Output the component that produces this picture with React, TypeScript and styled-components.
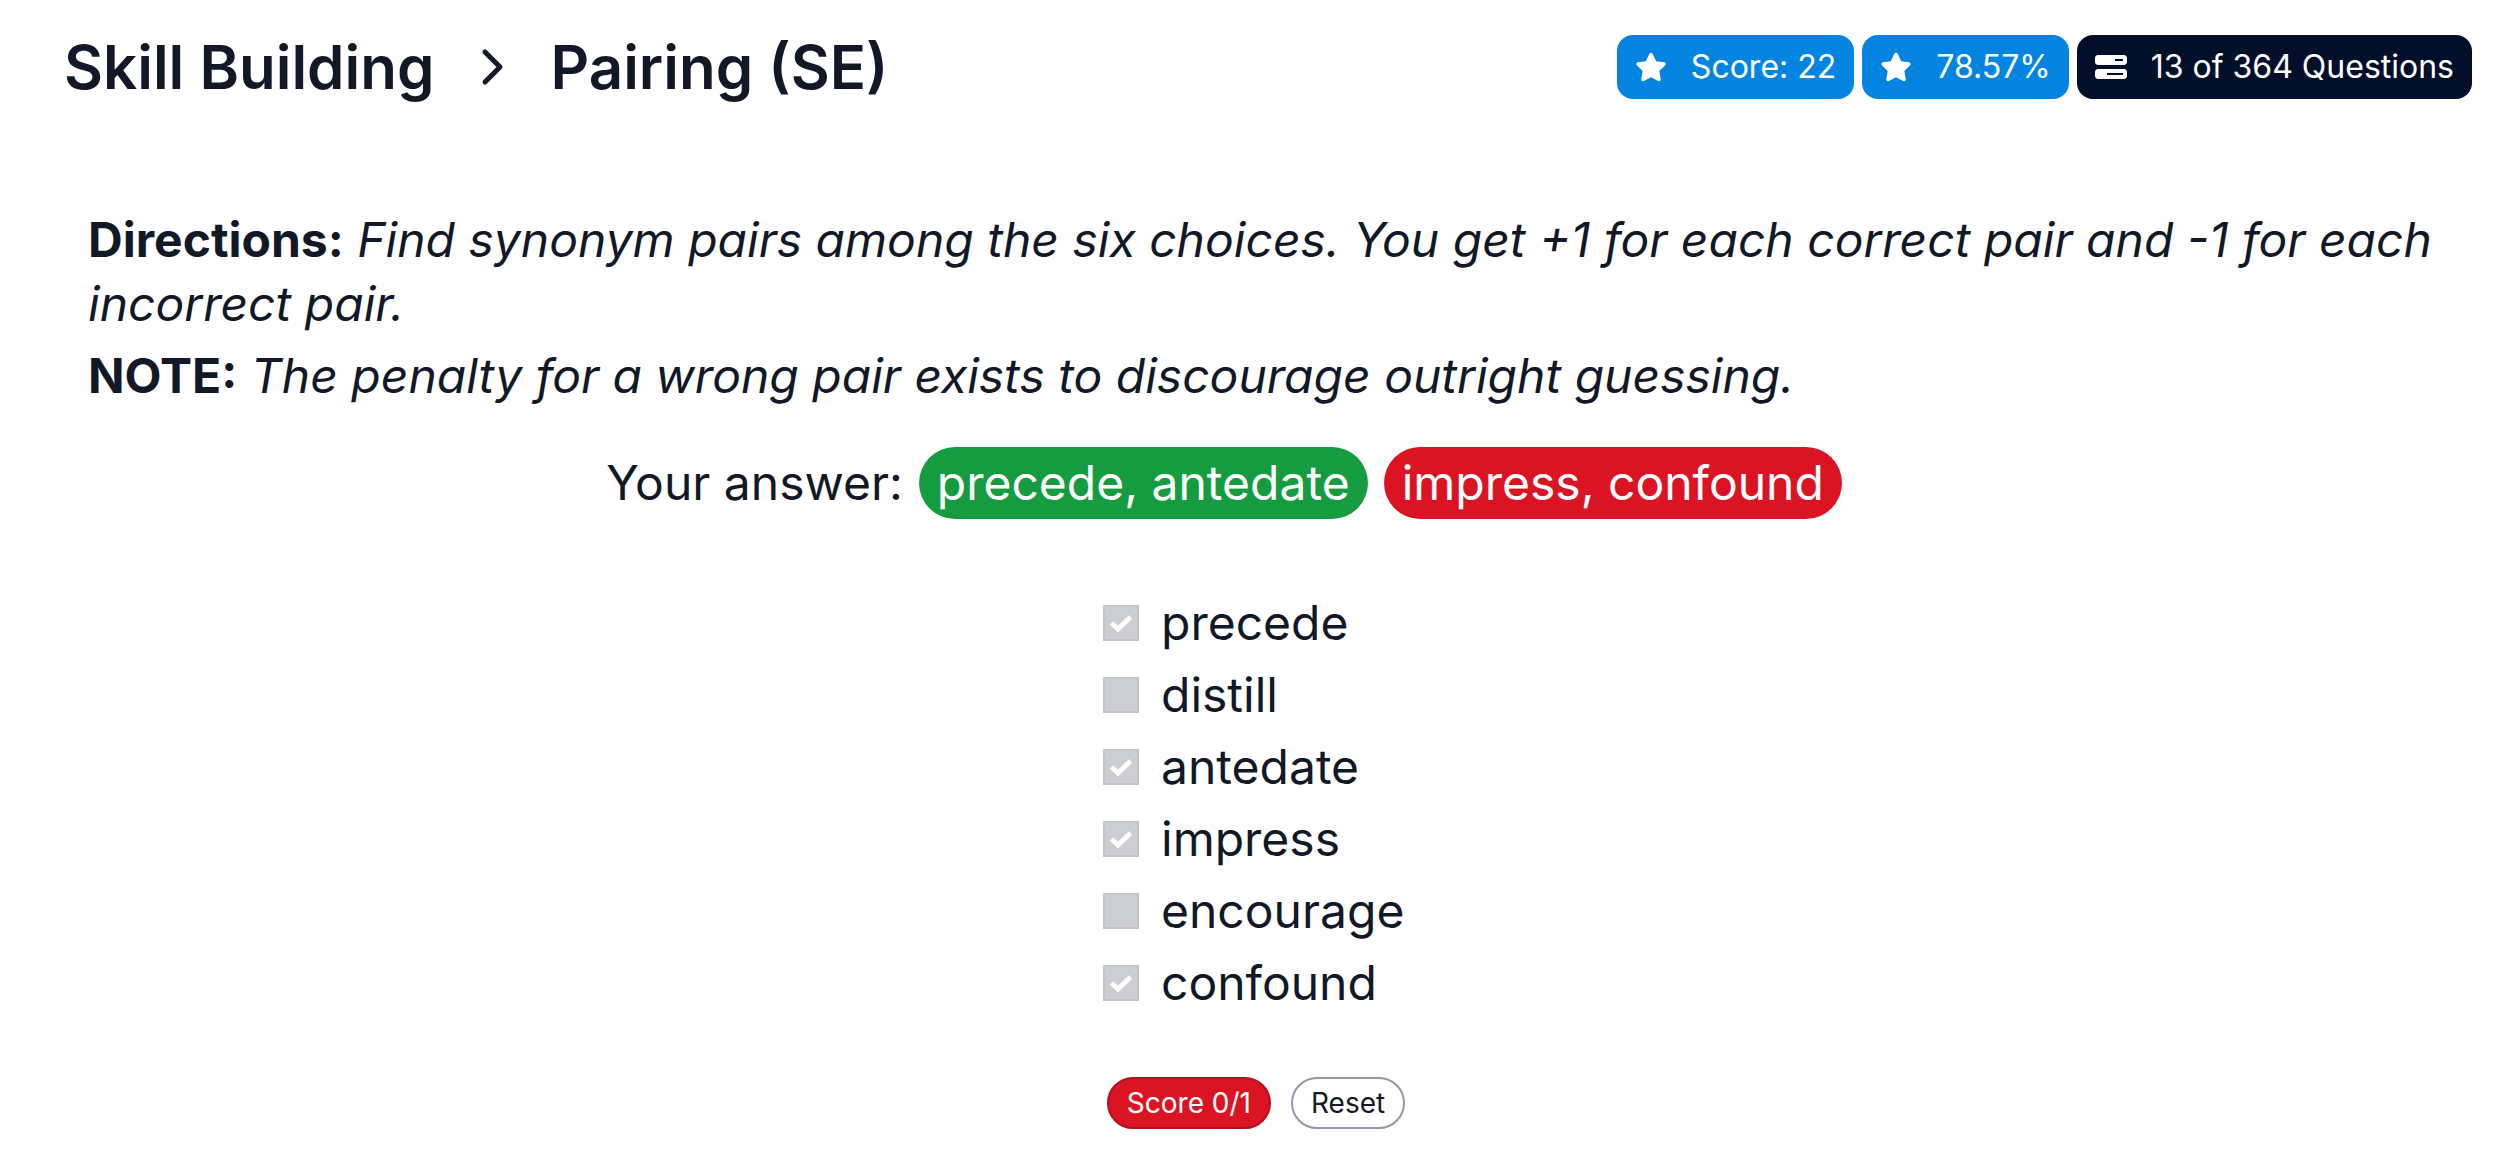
import React from "react";
import styled, { createGlobalStyle } from "styled-components";
import { FaStar, FaBarsProgress } from "react-icons/fa6";

const GlobalStyle = createGlobalStyle`
  *, *::before, *::after { box-sizing: border-box; }
  body {
    margin: 0;
    background: #ffffff;
    color: #111827;
    font-family: Inter, "Open Sans", sans-serif;
    font-size: 48px;
    line-height: 72px;
  }
`;

const Header = styled.header`
  display: flex;
  align-items: center;
  justify-content: space-between;
  padding: 31px 30px 0 64px;
`;

const Title = styled.h1`
  display: flex;
  align-items: center;
  gap: 44px;
  margin: 0;
  font-size: 60px;
  font-weight: 600;
  line-height: 72px;
`;

const Chevron = styled.svg`
  width: 28px;
  height: 40px;
  fill: none;
  stroke: currentColor;
  stroke-width: 5;
  stroke-linecap: round;
  stroke-linejoin: round;
`;

const Stats = styled.div`
  display: flex;
  gap: 8px;
`;

const Stat = styled.div<{ $dark?: boolean }>`
  display: flex;
  align-items: center;
  gap: 24px;
  height: 64px;
  padding: 0 18px;
  border-radius: 16px;
  background: ${(p) => (p.$dark ? "#020f2a" : "#0284e0")};
  color: #ffffff;
  font-size: 32px;
  line-height: 48px;
  white-space: nowrap;

  svg {
    height: 32px;
    width: auto;
  }
`;

const Main = styled.main`
  padding: 105px 78px 0 88px;
`;

const Directions = styled.section`
  margin-right: -16px;
`;

const Paragraph = styled.p`
  margin: 0 0 8px;
  line-height: 64px;
`;

const Answer = styled.div`
  display: flex;
  justify-content: center;
  gap: 16px;
  margin-top: 39px;
  padding-right: 64px;
`;

const Pair = styled.span<{ $correct: boolean }>`
  padding: 0 18px;
  border-radius: 36px;
  background: ${(p) => (p.$correct ? "#169c40" : "#db1424")};
  color: #ffffff;
`;

const Choices = styled.ul`
  width: max-content;
  min-width: 306px;
  margin: 68px auto 0;
  padding: 0;
  list-style: none;
`;

const Choice = styled.label`
  display: flex;
  align-items: center;
  gap: 22px;
`;

const Box = styled.span`
  display: grid;

  > * {
    grid-area: 1 / 1;
  }
`;

const Checkbox = styled.input`
  appearance: none;
  width: 36px;
  height: 36px;
  margin: 0;
  border: 2px solid #c4c4c4;
  background: #cdced2;
`;

const Tick = styled.svg`
  width: 36px;
  height: 36px;
  fill: none;
  stroke: #ffffff;
  stroke-width: 5;
  pointer-events: none;
`;

const Actions = styled.div`
  display: flex;
  justify-content: center;
  gap: 20px;
  padding: 58px 0 31px;
`;

const Button = styled.button<{ $failed?: boolean }>`
  height: 52px;
  padding: 0 18px;
  border: 2px solid ${(p) => (p.$failed ? "#b3101d" : "#9099a9")};
  border-radius: 26px;
  background: ${(p) => (p.$failed ? "#db1424" : "#ffffff")};
  color: ${(p) => (p.$failed ? "#ffffff" : "#111827")};
  font-family: inherit;
  font-size: 28px;
  line-height: 40px;
`;

const choices = [
  { word: "precede", picked: true },
  { word: "distill", picked: false },
  { word: "antedate", picked: true },
  { word: "impress", picked: true },
  { word: "encourage", picked: false },
  { word: "confound", picked: true },
];

export default function App() {
  return (
    <>
      <GlobalStyle />
      <Header>
        <Title>
          <span>Skill Building</span>
          <Chevron viewBox="0 0 28 40" aria-hidden="true">
            <path d="M6 5 L21 20 L6 35" />
          </Chevron>
          <span>Pairing (SE)</span>
        </Title>
        <Stats>
          <Stat>
            <FaStar />
            <span>Score: 22</span>
          </Stat>
          <Stat>
            <FaStar />
            <span>78.57%</span>
          </Stat>
          <Stat $dark>
            <FaBarsProgress />
            <span>13 of 364 Questions</span>
          </Stat>
        </Stats>
      </Header>
      <Main>
        <Directions>
          <Paragraph>
            <strong>Directions:</strong>{" "}
            <em>
              Find synonym pairs among the six choices. You get +1 for each correct pair and -1
              for each incorrect pair.
            </em>
          </Paragraph>
          <Paragraph>
            <strong>NOTE:</strong>{" "}
            <em>The penalty for a wrong pair exists to discourage outright guessing.</em>
          </Paragraph>
        </Directions>
        <Answer>
          <span>Your answer:</span>
          <Pair $correct>precede, antedate</Pair>
          <Pair $correct={false}>impress, confound</Pair>
        </Answer>
        <Choices>
          {choices.map(({ word, picked }) => (
            <li key={word}>
              <Choice>
                <Box>
                  <Checkbox type="checkbox" defaultChecked={picked} disabled />
                  {picked && (
                    <Tick viewBox="0 0 36 36" aria-hidden="true">
                      <path d="M8.5 18 L15 24 L27.5 12" />
                    </Tick>
                  )}
                </Box>
                {word}
              </Choice>
            </li>
          ))}
        </Choices>
        <Actions>
          <Button type="button" $failed>
            Score 0/1
          </Button>
          <Button type="button">Reset</Button>
        </Actions>
      </Main>
    </>
  );
}
